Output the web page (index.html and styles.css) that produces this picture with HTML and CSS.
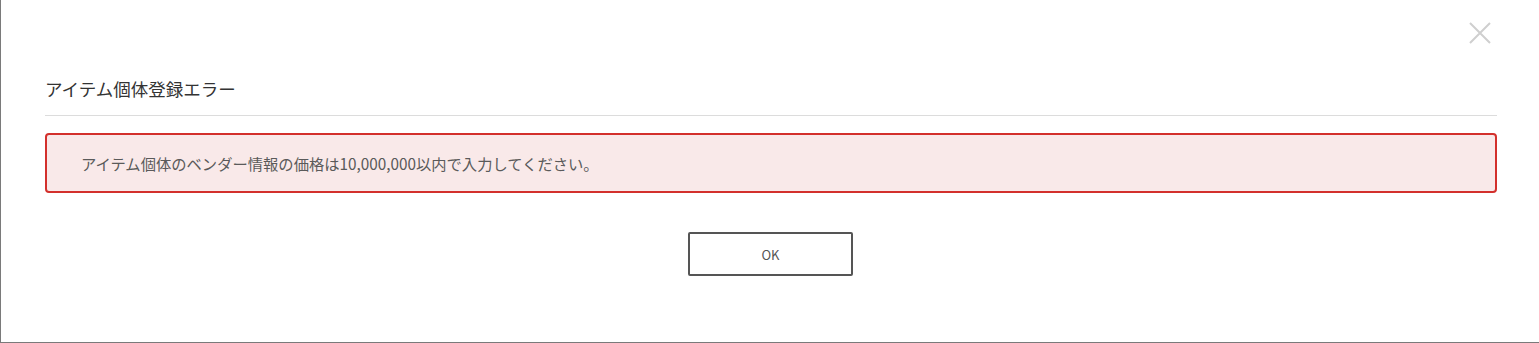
FILE: index.html
```html
<!DOCTYPE html>
<html lang="ja">
<head>
<meta charset="utf-8">
<link rel="stylesheet" href="styles.css">
</head>
<body>
<div class="modal">
  <div class="modal-top">
    <button class="close" aria-label="閉じる">
      <svg width="22" height="22" viewBox="0 0 22 22"><path d="M1 1L21 21M21 1L1 21" stroke="#cfcfcf" stroke-width="2" fill="none"/></svg>
    </button>
  </div>
  <div class="modal-body">
    <h2 class="title">アイテム個体登録エラー</h2>
    <div class="alert">アイテム個体のベンダー情報の価格は10,000,000以内で入力してください。</div>
    <div class="actions">
      <button class="ok">OK</button>
    </div>
  </div>
</div>
</body>
</html>
```

FILE: styles.css
```css
html, body {
  margin: 0;
  padding: 0;
  background: #fff;
  overflow: hidden;
}
body {
  font-family: "Noto Sans CJK JP", "Noto Sans", sans-serif;
  color: #333;
}
.modal {
  box-sizing: border-box;
  width: 1539px;
  height: 343px;
  border-left: 1px solid #7a7a7a;
  border-bottom: 1px solid #7a7a7a;
  background: #fff;
}
.modal-top {
  display: flex;
  justify-content: flex-end;
  padding: 22px 48px 0 0;
  height: 22px;
}
.close {
  width: 22px;
  height: 22px;
  padding: 0;
  border: 0;
  background: none;
  display: block;
}
.close svg { display: block; }
.modal-body {
  padding: 0 42px 0 44px;
}
.title {
  margin: 33px 0 0 0;
  font-size: 17.5px;
  font-weight: 400;
  line-height: 24px;
  color: #333;
  padding-bottom: 14px;
  border-bottom: 1px solid #dcdcdc;
}
.alert {
  margin-top: 17px;
  height: 60px;
  box-sizing: border-box;
  border: 2px solid #d3302c;
  border-radius: 4px;
  background: #f9e9e9;
  display: flex;
  align-items: center;
  padding: 0 0 0 34px;
  font-size: 15.3px;
  color: #5a5a5a;
  font-family: "Noto Sans CJK JP", sans-serif;
}
.actions {
  display: flex;
  justify-content: center;
  margin-top: 39px;
}
.ok {
  width: 165px;
  height: 44px;
  box-sizing: border-box;
  border: 2px solid #555;
  border-radius: 2px;
  background: #fff;
  font-family: "Noto Sans CJK JP", sans-serif;
  font-size: 13px;
  color: #555;
  margin-right: 1px;
}
```
